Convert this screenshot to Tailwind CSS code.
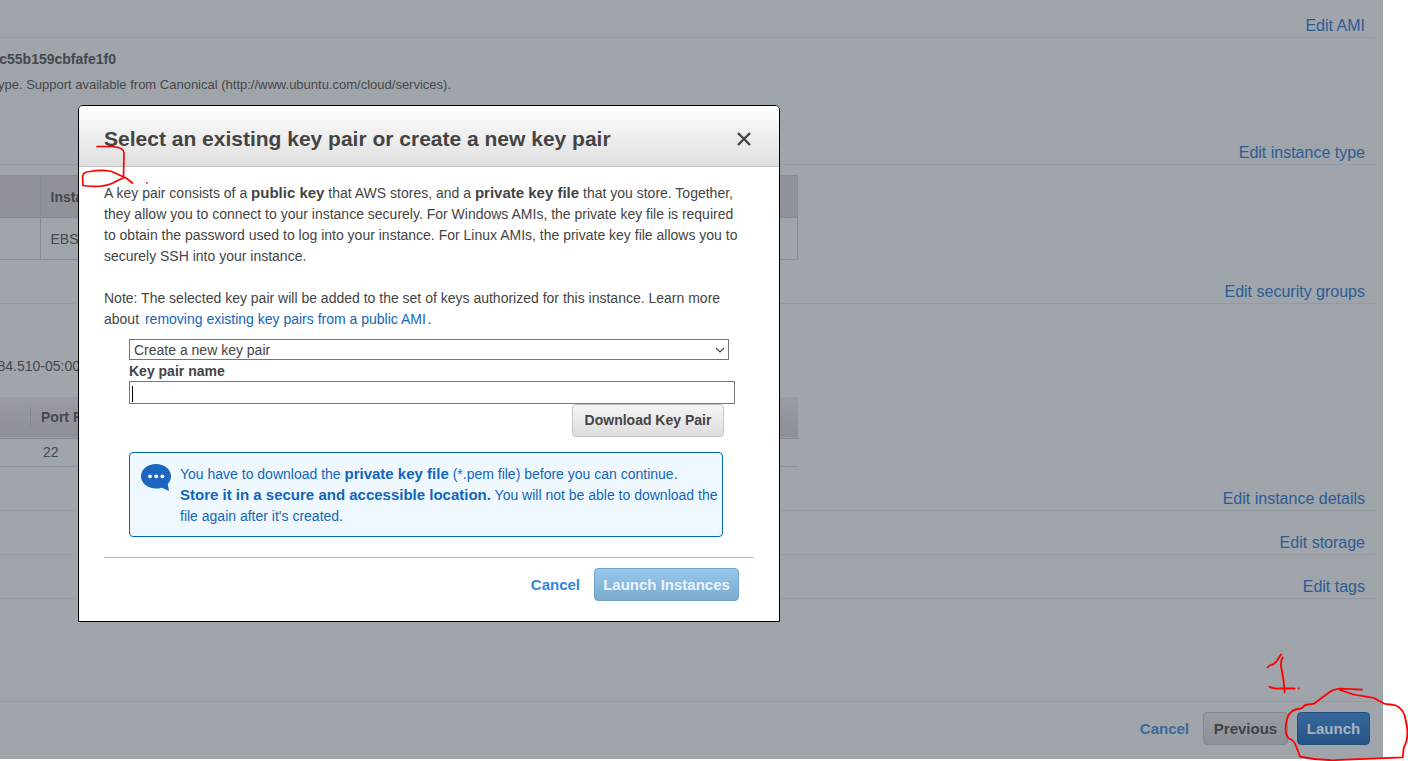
<!DOCTYPE html>
<html lang="en">
<head>
<meta charset="utf-8">
<title>Review Instance Launch</title>
<script src="https://cdn.jsdelivr.net/npm/@tailwindcss/browser@4"></script>
</head>
<body class="relative min-h-screen overflow-hidden bg-white font-['Liberation_Sans',Arial,sans-serif] text-sm text-[#444]">

<!-- Review page, dimmed behind the dialog -->
<main class="mr-[25px] flex h-[calc(100vh-2px)] flex-col overflow-hidden bg-[#a0a4ab] text-[#45484d]">
  <div class="mr-2 flex grow flex-col">
    <section class="h-[127px]">
      <header class="flex h-[38px] items-end justify-end border-b border-[#959aa2] pr-[10px]"><a href="#ami" class="text-base leading-[22px] text-[#2a5d94]">Edit AMI</a></header>
      <h3 class="mt-[11px] flex w-[116px] justify-end font-bold whitespace-nowrap leading-5">c55b159cbfafe1f0</h3>
      <p class="mt-[6px] flex w-[451px] justify-end text-[13px] leading-5 whitespace-nowrap">Type. Support available from Canonical (http://www.ubuntu.com/cloud/services).</p>
    </section>

    <section class="h-[139px]">
      <header class="flex h-[38px] items-end justify-end border-b border-[#959aa2] pr-[10px]"><a href="#type" class="text-base leading-[22px] text-[#2a5d94]">Edit instance type</a></header>
      <table class="mt-[10px] w-[798px] border-collapse border border-l-0 border-[#878b92] text-left">
        <tr class="h-[42px] bg-[#8f9299]"><th class="w-10 border border-l-0 border-[#878b92]"></th><th class="border border-[#878b92] pl-[10px] font-bold">Instance Storage (GB)</th></tr>
        <tr class="h-[42px]"><td class="border border-l-0 border-[#878b92]"></td><td class="border border-[#878b92] pl-[10px]">EBS only</td></tr>
      </table>
    </section>

    <section class="h-[207px]">
      <header class="flex h-[38px] items-end justify-end border-b border-[#959aa2] pr-[10px]"><a href="#security" class="text-base leading-[22px] text-[#2a5d94]">Edit security groups</a></header>
      <p class="mt-[52px] flex w-20 justify-end leading-5 whitespace-nowrap">84.510-05:00</p>
      <table class="mt-[21px] w-[798px] border-collapse text-left">
        <tr class="h-[41px] border-b border-[#82868d] bg-linear-to-b from-[#999ca3] to-[#8c8f96]"><th class="w-[31px] p-0"><span class="block h-5 border-r border-[#82868d]"></span></th><th class="pl-[10px] font-bold">Port Range</th></tr>
        <tr class="h-7 border-b border-[#8e9299]"><td></td><td class="pl-3">22</td></tr>
      </table>
    </section>

    <section class="mb-[6px]"><header class="flex h-[38px] items-end justify-end border-b border-[#959aa2] pr-[10px]"><a href="#details" class="text-base leading-[22px] text-[#2a5d94]">Edit instance details</a></header></section>
    <section class="mb-[6px]"><header class="flex h-[38px] items-end justify-end border-b border-[#959aa2] pr-[10px]"><a href="#storage" class="text-base leading-[22px] text-[#2a5d94]">Edit storage</a></header></section>
    <section><header class="flex h-[38px] items-end justify-end border-b border-[#959aa2] pr-[10px]"><a href="#tags" class="text-base leading-[22px] text-[#2a5d94]">Edit tags</a></header></section>
  </div>

  <footer class="flex h-[58px] shrink-0 items-start justify-end border-t border-[#959aa2] pt-[10px] pr-[13px] text-[15px] font-bold">
    <a href="#cancel" class="mr-[14px] leading-[33px] text-[#366b9f]">Cancel</a>
    <button type="button" class="mr-[9px] h-[33px] w-[85px] rounded border border-[#84888e] bg-linear-to-b from-[#9a9da4] to-[#8c9097] text-[#404348]">Previous</button>
    <button type="button" class="h-[33px] w-[73px] rounded border border-[#24507f] bg-linear-to-b from-[#37689c] to-[#265588] text-[#a9b2be]">Launch</button>
  </footer>
</main>

<!-- Key pair dialog -->
<div role="dialog" aria-labelledby="dialog-title" class="absolute top-[105px] left-[78px] w-[702px] overflow-hidden rounded-t-[5px] border border-black bg-white">
  <header class="flex h-[61px] items-center justify-between border-b border-[#c4c4c4] bg-linear-to-b from-white to-[#dfdfdf] px-[25px] pt-[6px]">
    <h2 id="dialog-title" class="text-[21px] font-bold">Select an existing key pair or create a new key pair</h2>
    <button type="button" aria-label="Close" class="mr-[3px]">
      <svg class="size-[14px]" viewBox="0 0 14 14" fill="none" stroke="#444" stroke-width="2.4"><path d="M1 1 13 13M13 1 1 13"/></svg>
    </button>
  </header>

  <div class="px-[25px] pt-4 pb-5 leading-[21px]">
    <p>A key pair consists of a <b class="text-[15px] leading-none">public key</b> that AWS stores, and a <b class="text-[15px] leading-none">private key file</b> that you store. Together,<br>they allow you to connect to your instance securely. For Windows AMIs, the private key file is required<br>to obtain the password used to log into your instance. For Linux AMIs, the private key file allows you to<br>securely SSH into your instance.</p>
    <p class="mt-[21px]">Note: The selected key pair will be added to the set of keys authorized for this instance. Learn more<br>about <a href="#remove" class="mx-[2px] text-[#1166bb]">removing existing key pairs from a public AMI</a>.</p>

    <form class="mt-[9px] pl-[25px]">
      <div class="relative w-[600px]">
        <select aria-label="Key pair option" class="block h-[21px] w-full appearance-none border border-[#767676] bg-white pt-px pl-1 leading-[19px]"><option>Create a new key pair</option></select>
        <svg class="pointer-events-none absolute top-2 right-1 h-[6px] w-[10px]" viewBox="0 0 10 6" fill="none" stroke="#444" stroke-width="1.2"><path d="M1 1 5 5 9 1"/></svg>
      </div>
      <label for="key-name" class="block h-[21px] pt-px font-bold">Key pair name</label>
      <div class="relative w-[606px]">
        <input id="key-name" type="text" class="block h-[23px] w-full border border-[#767676] px-[2px]">
        <span class="absolute top-[5px] left-[3px] h-4 w-px bg-black"></span>
      </div>
      <div class="flex w-[595px] justify-end">
        <button type="button" class="h-[33px] w-[152px] rounded border border-[#c4c4c4] bg-linear-to-b from-[#f4f4f4] to-[#dedede] font-bold">Download Key Pair</button>
      </div>
      <div class="mt-[15px] flex h-[85px] w-[594px] gap-[9px] rounded border border-[#0067b1] bg-[#f0f8ff] pt-[11px] pl-[11px] text-[#1166bb]">
        <svg class="h-[27px] w-[30px] shrink-0" viewBox="0 0 30 27"><path fill="#1a66c0" d="M15 0C23.300 0 30 5.400 30 12.300c0 3-1.200 5.700-3.200 7.800L28 27l-7.200-3.300C19 24.300 17 24.600 15 24.600 6.700 24.600 0 19.200 0 12.300S6.700 0 15 0Z"/><g fill="#fff"><circle cx="9" cy="12.300" r="1.900"/><circle cx="15.200" cy="12.300" r="1.900"/><circle cx="21.400" cy="12.300" r="1.900"/></g></svg>
        <p class="whitespace-nowrap">You have to download the <b class="text-[15px] leading-none">private key file</b> (*.pem file) before you can continue.<br><b class="text-[15px] leading-none">Store it in a secure and accessible location.</b> You will not be able to download the<br>file again after it's created.</p>
      </div>
    </form>

    <div class="mt-5 flex justify-end border-t border-[#bbb] pt-[10px] pr-[15px] text-[15px] font-bold">
      <a href="#cancel-dialog" class="mr-[14px] leading-[33px] text-[#3184dd]">Cancel</a>
      <button type="button" class="h-[33px] w-[145px] rounded border border-[#74a5cb] bg-linear-to-b from-[#98caee] to-[#7aa9cd] text-[#eaf4fc]">Launch Instances</button>
    </div>
  </div>
</div>

<!-- Hand-drawn step markers -->
<svg class="pointer-events-none absolute top-[140px] left-[78px] h-[52px] w-[80px]" viewBox="78 140 80 52" fill="none" stroke="#f00" stroke-width="1.700" stroke-linecap="round" stroke-linejoin="round"><path d="M97 146.500H112C119 147 124 149 124 153L123.500 178Q118 180 113 183C104 187 93 187 83 185.500L82.500 177Q83 171.500 90 171.500C103 169 112 171 115 173L126 178 132.500 183M146.800 182.800h.2"/></svg>
<svg class="pointer-events-none absolute right-0 bottom-0 h-[111px] w-[148px]" viewBox="1260 650 148 111" fill="none" stroke="#f00" stroke-width="1.800" stroke-linecap="round" stroke-linejoin="round"><path d="M1267.500 667.500Q1270 664.500 1273 664.500L1276 662 1281 654.500M1282.700 657.500Q1280.500 661 1281 666L1283.500 680 1284.700 692.500M1269.500 686.700Q1274 689 1280 688.500H1294.700M1298.700 688.500h.1M1362 689.700 1340 688.700Q1332 689.500 1327 694L1314 703.700C1308 705 1305 704 1304 706Q1302 709 1298 709C1290 710 1287 716 1286 724 1285 731 1286 736 1289 738.500 1293 740 1295 742 1296 746L1300 756.500Q1315 760 1333 760.200L1402.700 757.300 1403.700 748C1408 740 1408 730 1406 722 1405 713 1402 708 1396 705.500 1392 704 1388 705 1384 703.500L1374 698C1366 696 1359 696 1352 694L1340 690"/></svg>
</body>
</html>
